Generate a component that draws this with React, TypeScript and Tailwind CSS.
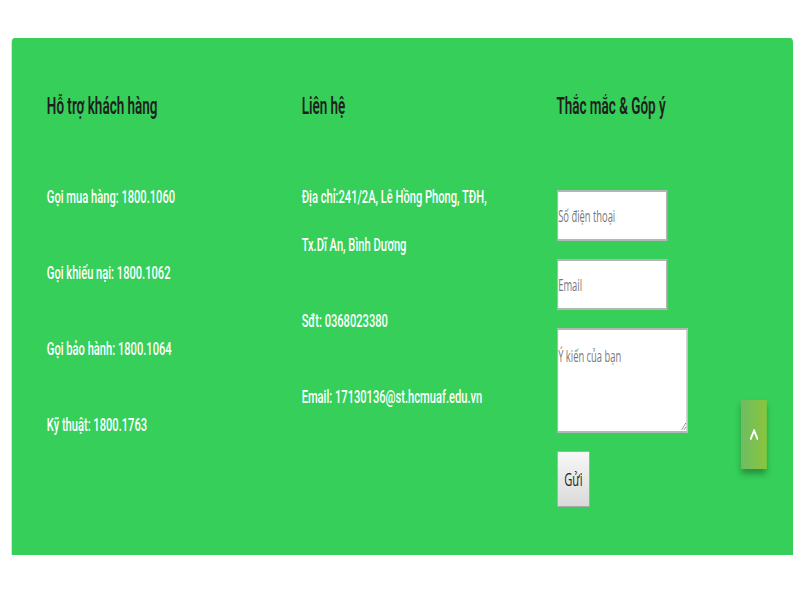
const support = ["Gọi mua hàng: 1800.1060", "Gọi khiếu nại: 1800.1062", "Gọi bảo hành: 1800.1064", "Kỹ thuật: 1800.1763"];

const contact = ["Địa chỉ:241/2A, Lê Hồng Phong, TĐH, Tx.Dĩ An, Bình Dương", "Sđt: 0368023380", "Email: 17130136@st.hcmuaf.edu.vn"];

// the shot is squeezed sideways: page laid out at 1366px, drawn into 800px
export default function App() {
  return (
    <div className="h-[600px] w-[800px] overflow-hidden bg-white">
      <div className="relative h-[600px] w-[1366px] origin-top-left scale-x-[0.5857] pt-[38px] pl-[20px] font-['Roboto',sans-serif]">
        <footer className="h-[517px] w-[1334px] rounded-t-[5px] bg-[#36cf5a] pl-[60px] pt-[57px]">
          <div className="grid grid-cols-[435px_435px_435px]">
            <div>
              <h3 className="text-[23px] leading-6 font-semibold text-[#1e1e1e]">Hỗ trợ khách hàng</h3>
              <div className="mt-[54px] flex flex-col gap-[28px]">
                {support.map((s) => (
                  <p key={s} className="text-[19px] leading-[48px] font-medium text-white">{s}</p>
                ))}
              </div>
            </div>

            <div>
              <h3 className="text-[23px] leading-6 font-semibold text-[#1e1e1e]">Liên hệ</h3>
              <div className="mt-[54px] flex flex-col gap-[28px]">
                {contact.map((s) => (
                  <p key={s} className="w-[340px] text-[19px] leading-[48px] font-medium text-white">{s}</p>
                ))}
              </div>
            </div>

            <div>
              <h3 className="text-[23px] leading-6 font-semibold text-[#1e1e1e]">Thắc mắc &amp; Góp ý</h3>
              <form className="mt-[71px] flex flex-col items-start gap-[18px] font-['Open_Sans',sans-serif]">
                <input
                  placeholder="Số điện thoại"
                  className="ml-px h-[51px] w-[188px] border-2 border-[#b5b5b5] bg-white p-0 text-[16px] text-[#333] outline-none placeholder:text-[#777]"
                />
                <input
                  placeholder="Email"
                  className="ml-px h-[51px] w-[188px] border-2 border-[#b5b5b5] bg-white p-0 text-[16px] text-[#333] outline-none placeholder:text-[#777]"
                />
                <textarea
                  placeholder="Ý kiến của bạn"
                  className="ml-px h-[105px] w-[223px] border-2 border-[#b5b5b5] bg-white p-0 pt-[14px] text-[16px] text-[#333] outline-none placeholder:text-[#777]"
                />
                <button
                  type="button"
                  className="ml-px h-[56px] w-[56px] border border-[#aaa] bg-gradient-to-b from-[#f7f7f7] to-[#dadada] text-[19px] text-[#222]"
                >
                  Gửi
                </button>
              </form>
            </div>
          </div>
        </footer>

        <button className="absolute left-[1265px] top-[400px] flex h-[69px] w-[44px] items-center justify-center bg-gradient-to-r from-[#6cbd63] to-[#8bc43a] shadow-[0_5px_8px_rgba(0,0,0,0.3)]">
          <svg width="15" height="11" viewBox="0 0 15 11" fill="none" stroke="white" strokeWidth="3" strokeLinecap="round" strokeLinejoin="round">
            <polyline points="2,9.5 7.5,1.5 13,9.5" />
          </svg>
        </button>
      </div>
    </div>
  );
}
